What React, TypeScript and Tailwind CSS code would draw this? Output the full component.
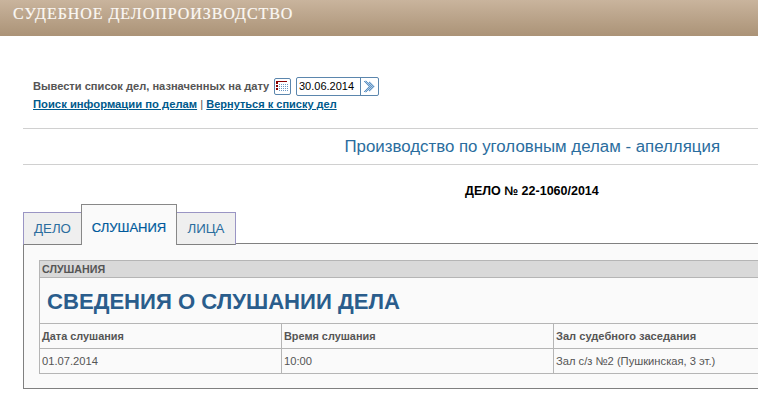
import React from 'react'

const arial = { fontFamily: '"Liberation Sans", Arial, sans-serif' }

function CalendarIcon() {
    return (
        <svg width="15" height="15" viewBox="0 0 15 15" className="block">
            <rect x="1" y="2" width="11" height="1" fill="#8b0000" />
            <rect x="1" y="3" width="2" height="2" fill="#8b0000" />
            <rect x="1" y="6" width="2" height="2" fill="#8b0000" />
            <rect x="1" y="9" width="2" height="2" fill="#8b0000" />
            {[4, 6, 8, 10, 12].map((x) =>
                [5, 7, 9, 11].map((y) => (
                    <rect key={`${x}-${y}`} x={x} y={y} width="1" height="1" fill="#6b97c4" />
                ))
            )}
        </svg>
    )
}

function ArrowsIcon() {
    // шахматные двойные стрелки
    const cells = [
        [1, 1], [3, 1], [2, 2], [4, 2], [3, 3], [5, 3], [4, 4], [6, 4], [5, 5], [7, 5], [6, 6], [8, 6],
        [5, 7], [7, 7], [4, 8], [6, 8], [3, 9], [5, 9], [2, 10], [4, 10], [1, 11], [3, 11],
        [6, 2], [7, 3], [8, 4], [9, 5], [10, 6], [9, 7], [8, 8], [7, 9], [6, 10],
    ]
    return (
        <svg width="13" height="13" viewBox="0 0 13 13" className="block">
            <path d="M2 1 L7 6.5 L2 12" fill="none" stroke="#a9c6e2" strokeWidth="2" />
            <path d="M6 2 L10.5 6.5 L6 11" fill="none" stroke="#a9c6e2" strokeWidth="2" />
            {cells.map(([x, y]) => (
                <rect key={`${x}-${y}`} x={x} y={y} width="1" height="1" fill="#5f93c4" />
            ))}
        </svg>
    )
}

export default function App() {
    return (
        <div className="w-[758px] h-[402px] overflow-hidden bg-white" style={arial}>
            {/* Шапка */}
            <div className="h-9 pl-[13px] pt-[4px] bg-gradient-to-b from-[#c9b49d] to-[#ab9377]">
                <div className="text-[16px] leading-[20px] tracking-[0.95px] text-[#fbf8f4] [-webkit-text-stroke:0.2px_#fbf8f4]" style={{ fontFamily: '"Liberation Serif", "Times New Roman", serif' }}>
                    СУДЕБНОЕ ДЕЛОПРОИЗВОДСТВО
                </div>
            </div>

            <div className="pl-[23px]">
                {/* Выбор даты */}
                <div className="pl-[10px] pt-[41px] h-[92px]">
                    <div className="flex items-center h-[19px] text-[11.1px] font-bold text-[#555555]">
                        <span className="w-[236px] whitespace-nowrap">Вывести список дел, назначенных на дату</span>
                        <span className="ml-[5px] w-[17px] h-[17px] flex items-center justify-center border border-[#5b86ad] rounded-[2px]">
                            <CalendarIcon />
                        </span>
                        <div className="ml-[5px] flex h-[19px] w-[83px] border border-[#5b86ad] rounded-[2px]">
                            <span className="flex-1 pl-[2px] text-[11px] leading-[17px] font-normal text-black">30.06.2014</span>
                            <span className="w-[18px] flex items-center justify-center border-l border-[#5b86ad]">
                                <ArrowsIcon />
                            </span>
                        </div>
                    </div>
                    <div className="mt-[1px] text-[11.25px] leading-[15px] font-bold text-[#555555]">
                        <a className="text-[#005a8c] underline">Поиск информации по делам</a>
                        <span className="font-normal"> | </span>
                        <a className="text-[11px] text-[#005a8c] underline">Вернуться к списку дел</a>
                    </div>
                </div>

                {/* Заголовок раздела */}
                <div className="h-[37px] border-y border-[#d0d0d0] pr-[38px] text-right text-[16.85px] leading-[35px] text-[#2a6d9e]">
                    Производство по уголовным делам - апелляция
                </div>

                <div className="h-[39px] pt-[19px] pl-[442px] text-[12.5px] leading-[15px] font-bold text-black">
                    ДЕЛО № 22-1060/2014
                </div>

                {/* Вкладки */}
                <div className="flex items-end h-[41px] -mb-[2px] relative z-10">
                    <div className="w-[58px] h-[33px] border border-r-0 border-[#9a95c4] border-b-[#808080] bg-[#efefef] text-center text-[13.3px] leading-[31px] text-[#2a6d9e]">
                        ДЕЛО
                    </div>
                    <div className="w-[96px] h-[41px] border border-b-0 border-[#888888] bg-[#fafafa] text-center text-[13px] leading-[46px] [-webkit-text-stroke:0.2px_#005a9c] text-[#005a9c]">
                        СЛУШАНИЯ
                    </div>
                    <div className="w-[59px] h-[33px] border border-l-0 border-[#9a95c4] border-b-[#808080] bg-[#efefef] text-center text-[13.3px] leading-[31px] text-[#2a6d9e]">
                        ЛИЦА
                    </div>
                </div>

                {/* Панель */}
                <div className="w-[800px] h-[146px] border border-[#808080] bg-[#fafafa] pl-[15px] pt-[16px]">
                    <div className="w-[760px] border border-[#b5b5b5] text-[#555555]">
                        <div className="h-[17px] bg-[#d9d9d9] border-b border-[#b5b5b5] pl-[2px] text-[10.7px] leading-[17px] font-bold">
                            СЛУШАНИЯ
                        </div>
                        <div className="h-[46px] pl-[7px] border-b border-[#b5b5b5] text-[22.1px] leading-[47px] font-bold text-[#2a5d8c]">
                            СВЕДЕНИЯ О СЛУШАНИИ ДЕЛА
                        </div>
                        <div className="grid grid-cols-[241px_272px_1fr] h-[25px] border-b border-[#b5b5b5] text-[10.9px] leading-[24px] font-bold">
                            <div className="pl-[2px]">Дата слушания</div>
                            <div className="pl-[2px] border-l border-[#b5b5b5]">Время слушания</div>
                            <div className="pl-[2px] border-l border-[#b5b5b5] text-[11.1px]">Зал судебного заседания</div>
                        </div>
                        <div className="grid grid-cols-[241px_272px_1fr] h-[24px] text-[11.2px] leading-[24px]">
                            <div className="pl-[2px]">01.07.2014</div>
                            <div className="pl-[2px] border-l border-[#b5b5b5]">10:00</div>
                            <div className="pl-[2px] border-l border-[#b5b5b5]">Зал с/з №2 (Пушкинская, 3 эт.)</div>
                        </div>
                    </div>
                </div>
            </div>
        </div>
    )
}
